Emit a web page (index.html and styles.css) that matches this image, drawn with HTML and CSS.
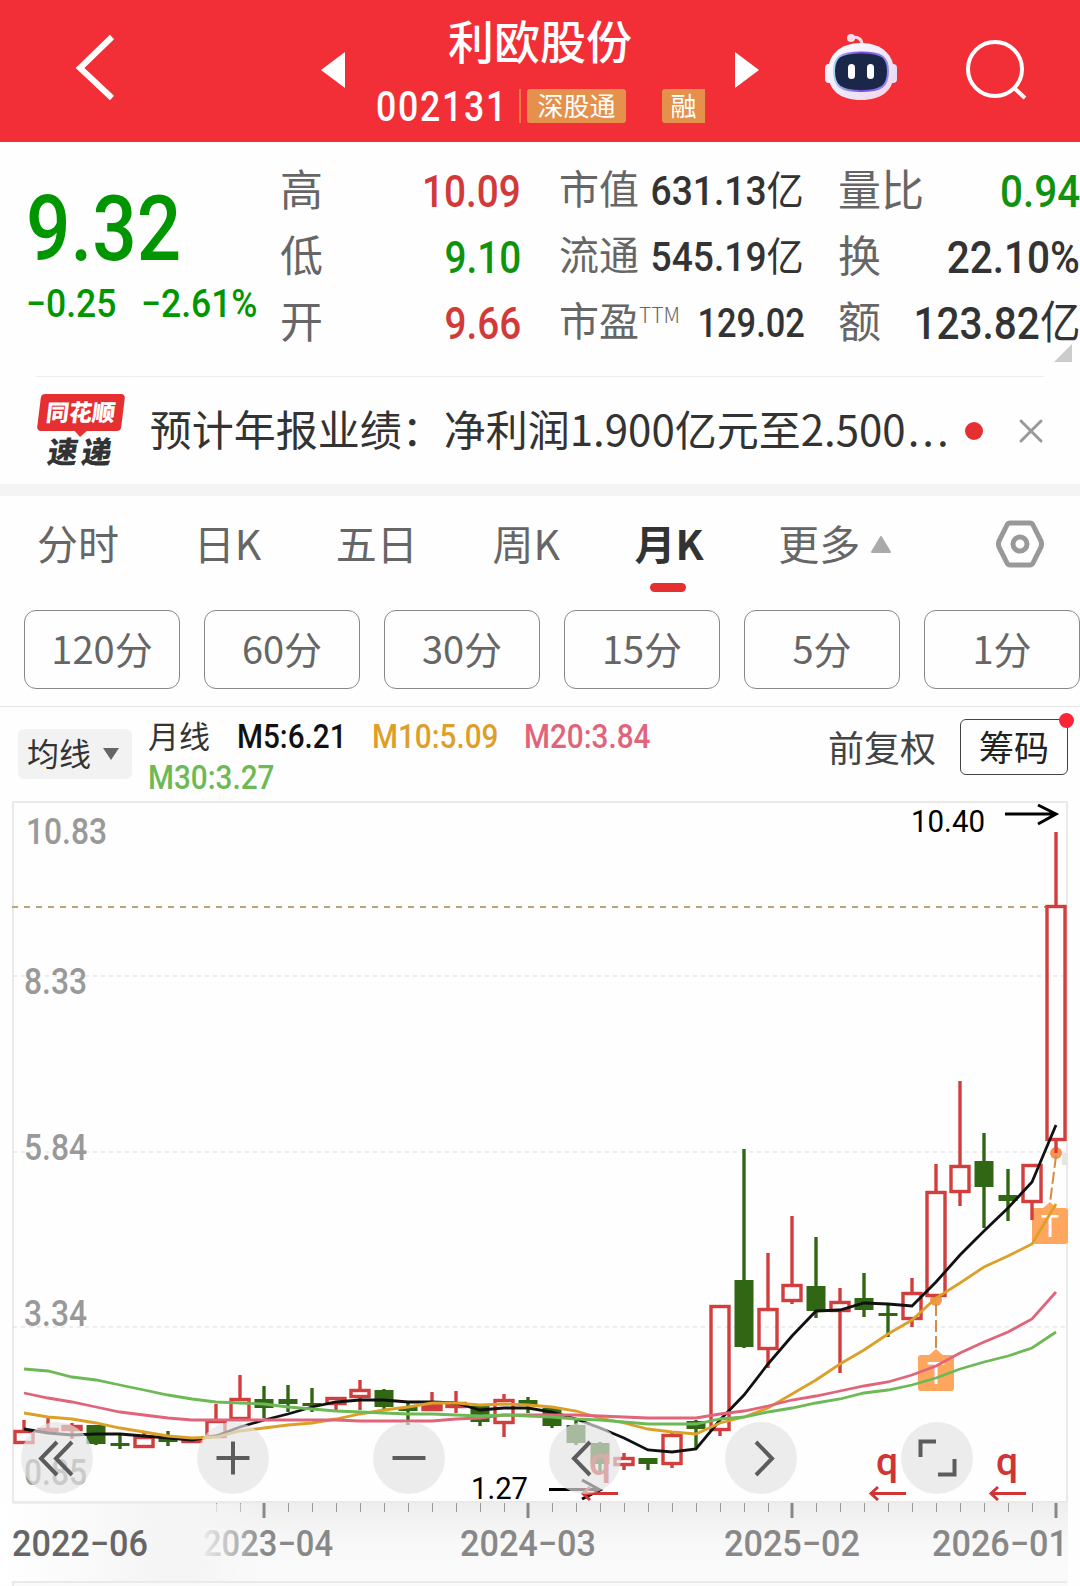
FILE: index.html
```html
<!DOCTYPE html>
<html lang="zh-CN">
<head>
    <meta charset="UTF-8">
    <meta name="viewport" content="width=device-width, initial-scale=1.0">

    <title>利欧股份 002131</title>
    <link rel="stylesheet" href="styles.css">
</head>
<body>

    <!-- Header -->
    <header class="header">
        <svg class="back" width="42" height="70" viewBox="0 0 42 70"><path d="M38 4 L6 35 L38 65"/></svg>
        <svg class="prev" width="24" height="36" viewBox="0 0 24 36"><path d="M24 0V36L0 18Z"/></svg>
        <div class="stock">
            <div class="stock-name">利欧股份</div>
            <div class="stock-info">
                <span class="code">002131</span>
                <span class="tag-line"></span>
                <span class="tag">深股通</span>
                <span class="tag tag-cut">融</span>
            </div>
        </div>
        <svg class="next" width="24" height="36" viewBox="0 0 24 36"><path d="M0 0V36L24 18Z"/></svg>
        <svg class="robot" width="74" height="68" viewBox="0 0 74 68">
            <defs>
                <linearGradient id="shell" x1="0" y1="0" x2="1" y2="1">
                    <stop offset="0" stop-color="#fff"/>
                    <stop offset=".6" stop-color="#ece6fb"/>
                    <stop offset="1" stop-color="#f8cfdf"/>
                </linearGradient>
                <linearGradient id="rim" x1="0" y1="0" x2="1" y2="0">
                    <stop offset="0" stop-color="#a9d4fa"/>
                    <stop offset=".5" stop-color="#7a46d8"/>
                    <stop offset="1" stop-color="#8c8cf0"/>
                </linearGradient>
            </defs>
            <path d="M27 5 C34 3 38 6 38 12" fill="none" stroke="#fbd5e2" stroke-width="3"/>
            <circle cx="27" cy="5" r="4" fill="#fbdde8"/>
            <rect x="1" y="31" width="12" height="19" rx="4" fill="#f3efff"/>
            <rect x="61" y="31" width="12" height="19" rx="4" fill="#e3dcfb"/>
            <path d="M37 10 C58 10 70 22 70 39 C70 58 57 67 37 67 C17 67 4 58 4 39 C4 22 16 10 37 10Z" fill="url(#shell)"/>
            <path d="M37 19.500 C58 19.500 64 24 64 38 C64 53 58 58 37 58 C16 58 10 53 10 38 C10 24 16 19.500 37 19.500Z" fill="#1b2748" stroke="url(#rim)" stroke-width="2"/>
            <rect x="24" y="31" width="7" height="15" rx="3.5" fill="#fff"/>
            <rect x="43" y="31" width="7" height="15" rx="3.5" fill="#fff"/>
        </svg>
        <svg class="search" width="62" height="62" viewBox="0 0 62 62"><circle cx="30" cy="30" r="27"/><path d="M48 48L60 59"/></svg>
    </header>

    <!-- Quote -->
    <section class="quote">
        <div class="price-box">
            <div class="price"><span class="num">9.32</span></div>
            <div class="change"><span class="num">−0.25</span><span class="num">−2.61%</span></div>
        </div>
        <div class="col">
            <div class="row"><label>高</label><span class="num red">10.09</span></div>
            <div class="row"><label>低</label><span class="num green">9.10</span></div>
            <div class="row"><label>开</label><span class="num red">9.66</span></div>
        </div>
        <div class="col col-mid">
            <div class="row"><label>市值</label><span class="num">631.13<i>亿</i></span></div>
            <div class="row"><label>流通</label><span class="num">545.19<i>亿</i></span></div>
            <div class="row"><label>市盈<sup>TTM</sup></label><span class="num pe">129.02</span></div>
        </div>
        <div class="col col-last">
            <div class="row"><label>量比</label><span class="num green">0.94</span></div>
            <div class="row"><label>换</label><span class="num">22.10%</span></div>
            <div class="row"><label>额</label><span class="num">123.82<i>亿</i></span></div>
        </div>
        <span class="corner"></span>
    </section>

    <!-- News -->
    <section class="news">
        <div class="news-logo">
            <div class="logo-top"><span>同花顺</span></div>
            <div class="logo-bottom">速递</div>
        </div>
        <div class="news-text">预计年报业绩：净利润1.900亿元至2.500<span class="dots">...</span></div>
        <span class="dot"></span>
        <svg class="close" width="26" height="26" viewBox="0 0 26 26"><path d="M3 3L23 23M23 3L3 23"/></svg>
    </section>

    <!-- Tabs -->
    <nav class="tabs">
        <span>分时</span>
        <span>日K</span>
        <span>五日</span>
        <span>周K</span>
        <span class="active">月K</span>
        <span class="more">更多 <svg width="22" height="19" viewBox="0 0 22 19"><path d="M11 2L20 17H2Z"/></svg></span>
        <svg class="setting" width="50" height="48" viewBox="0 0 50 48"><path d="M15 3H35Q37 3 38 5L46 21Q47 24 46 27L38 43Q37 45 35 45H15Q13 45 12 43L4 27Q3 24 4 21L12 5Q13 3 15 3Z"/><circle cx="25" cy="24" r="7"/></svg>
    </nav>
    <div class="minutes">
        <button>120分</button>
        <button>60分</button>
        <button>30分</button>
        <button>15分</button>
        <button>5分</button>
        <button>1分</button>
    </div>

    <!-- Average line legend -->
    <section class="legend">
        <div class="select">均线<svg width="18" height="13" viewBox="0 0 18 13"><path d="M1 0H17L9 12Z"/></svg></div>
        <div class="averages">
            <div class="line"><b>月线</b><span class="num m5">M5:6.21</span><span class="num m10">M10:5.09</span><span class="num m20">M20:3.84</span></div>
            <div class="line"><span class="num m30">M30:3.27</span></div>
        </div>
        <span class="adjust">前复权</span>
        <button class="chips">筹码</button>
    </section>

    <!-- Chart -->
    <svg class="chart" width="1080" height="796" viewBox="0 790 1080 796">
        <defs>
            <linearGradient id="axisBg" x1="0" y1="0" x2="0" y2="1">
                <stop offset="0" stop-color="#eee"/>
                <stop offset=".55" stop-color="#f9f9f9"/>
                <stop offset="1" stop-color="#fafafa"/>
            </linearGradient>
            <linearGradient id="fade" x1="0" y1="0" x2="1" y2="0">
                <stop offset="0" stop-color="#fff"/>
                <stop offset=".6" stop-color="#f5f5f5"/>
                <stop offset=".74" stop-color="#f5f5f5"/>
                <stop offset="1" stop-color="#f7f7f7" stop-opacity="0"/>
            </linearGradient>
        </defs>
        <rect x="13" y="1503" width="1055" height="83" fill="url(#axisBg)"/>
        <path class="frame" d="M13 802H1067V1502H13ZM1067 1582H13V1586"/>
        <path class="grid" d="M13 976H1067M13 1152H1067M13 1327H1067"/>
        <path class="now" d="M12 907H1046"/>

        <g class="price-label">
            <text x="26" y="844" textLength="81" lengthAdjust="spacingAndGlyphs">10.83</text>
            <text x="24" y="994" textLength="63" lengthAdjust="spacingAndGlyphs">8.33</text>
            <text x="24" y="1160" textLength="63" lengthAdjust="spacingAndGlyphs">5.84</text>
            <text x="24" y="1326" textLength="63" lengthAdjust="spacingAndGlyphs">3.34</text>
            <text x="24" y="1485" textLength="63" lengthAdjust="spacingAndGlyphs">0.85</text>
        </g>

        <g id="ticks"></g>
        <g class="date-label">
            <text x="203" y="1556" textLength="130" lengthAdjust="spacingAndGlyphs">2023−04</text>
            <text x="460" y="1556" textLength="136" lengthAdjust="spacingAndGlyphs">2024−03</text>
            <text x="724" y="1556" textLength="136" lengthAdjust="spacingAndGlyphs">2025−02</text>
            <text x="932" y="1556" textLength="136" lengthAdjust="spacingAndGlyphs">2026−01</text>
        </g>
        <rect x="0" y="1504" width="265" height="77" fill="url(#fade)"/>
        <text class="first-date" x="12" y="1556" textLength="136" lengthAdjust="spacingAndGlyphs">2022−06</text>

        <rect x="1062" y="1153" width="6" height="12" fill="#e5e5e5"/>
        <g class="badge">
            <rect x="918" y="1355" width="36" height="36" rx="3"/>
            <path d="M928 1356L936 1349L944 1356Z"/>
            <circle cx="936" cy="1300" r="6"/>
            <path class="link" d="M936 1304V1350"/>
            <text x="936" y="1384">T</text>
            <rect x="1032" y="1208" width="36" height="36" rx="3"/>
            <path d="M1042 1209L1050 1202L1058 1209Z"/>
            <circle cx="1056" cy="1153" r="6"/>
            <path class="link" d="M1056 1156L1050 1203"/>
            <text x="1050" y="1237">T</text>
        </g>

        <g id="candles"></g>
        <g id="lines"></g>

        <g class="mark">
            <text x="911" y="832" textLength="74" lengthAdjust="spacingAndGlyphs">10.40</text>
            <path d="M1005 814H1055M1038 805L1056 814L1038 824"/>
            <text x="471" y="1499" textLength="57" lengthAdjust="spacingAndGlyphs">1.27</text>
            <path d="M549 1489.500H599M582 1480L600 1490L582 1499"/>
        </g>
        <g class="rights">
            <text x="600" y="1475">q</text>
            <path d="M618 1493.500H584M590 1487L583 1493.500L590 1500"/>
            <text x="887" y="1475">q</text>
            <path d="M906 1493.500H872M878 1487L871 1493.500L878 1500"/>
            <text x="1007" y="1475">q</text>
            <path d="M1026 1493.500H992M998 1487L991 1493.500L998 1500"/>
        </g>

        <!-- Floating controls -->
        <g class="controls">
            <circle cx="57" cy="1458" r="36"/><path d="M57 1442L41 1458.500L57 1475M72 1442L56 1458.500L72 1475"/>
            <circle cx="233" cy="1458" r="36"/><path d="M216.500 1458H249.500M233 1441.500V1474.500"/>
            <circle cx="409" cy="1458" r="36"/><path d="M392.500 1458H425.500"/>
            <circle cx="585" cy="1458" r="36"/><path d="M590 1442L574 1458.500L590 1475"/>
            <circle cx="761" cy="1458" r="36"/><path d="M756 1442L772 1458.500L756 1475"/>
            <circle cx="937" cy="1458" r="36"/><path d="M936 1441.500H920.500V1457M938 1474.500H954.500V1459"/>
        </g>
    </svg>

    <script>
        var step = 24;
        // type, high, body top, body bottom, low (r = hollow red, f = filled red, g = green)
        var candles = [
            ['r', 1420, 1430, 1444, 1444], ['f', 1418, 1428, 1431, 1431], ['f', 1423, 1425, 1431, 1439],
            ['g', 1425, 1425, 1444, 1445], ['g', 1435, 1443, 1446, 1449], ['r', 1433, 1436, 1448, 1448],
            ['g', 1431, 1437, 1442, 1446], ['f', 1439, 1439, 1443, 1443], ['r', 1404, 1420, 1438, 1438],
            ['r', 1375, 1398, 1420, 1420], ['g', 1386, 1399, 1408, 1418], ['g', 1385, 1399, 1404, 1412],
            ['g', 1388, 1403, 1406, 1412], ['r', 1397, 1397, 1405, 1410], ['r', 1380, 1389, 1398, 1410],
            ['g', 1389, 1390, 1407, 1409], ['g', 1403, 1407, 1411, 1425], ['f', 1392, 1404, 1411, 1411],
            ['f', 1391, 1402, 1408, 1413], ['g', 1406, 1406, 1422, 1426], ['r', 1394, 1399, 1424, 1437],
            ['g', 1397, 1400, 1405, 1413], ['g', 1406, 1408, 1426, 1428], ['g', 1419, 1425, 1443, 1445],
            ['g', 1442, 1443, 1464, 1472], ['r', 1453, 1457, 1466, 1470], ['g', 1458, 1458, 1464, 1470],
            ['r', 1433, 1434, 1465, 1468], ['g', 1420, 1421, 1429, 1449], ['r', 1305, 1305, 1431, 1436],
            ['g', 1149, 1280, 1347, 1348], ['r', 1253, 1308, 1350, 1368], ['r', 1216, 1284, 1302, 1304],
            ['g', 1237, 1286, 1311, 1318], ['r', 1288, 1301, 1312, 1373], ['g', 1273, 1298, 1310, 1317],
            ['g', 1305, 1313, 1316, 1337], ['r', 1278, 1292, 1320, 1327], ['r', 1164, 1191, 1297, 1297],
            ['r', 1081, 1165, 1193, 1206], ['g', 1133, 1161, 1187, 1228], ['g', 1169, 1195, 1201, 1221],
            ['r', 1164, 1164, 1203, 1220], ['r', 832, 905, 1141, 1153]
        ];
        var averages = {
            '#111111': [1429,1433,1435,1434,1434,1436,1438,1440,1436,1427,1420,1414,1407,1402,1400,1400,1402,1402,1403,1410,1408,1408,1412,1419,1428,1438,1450,1452,1449,1420,1395,1364,1336,1311,1310,1303,1304,1306,1282,1255,1231,1208,1182,1125],
            '#dca029': [1413,1417,1419,1423,1428,1432,1436,1438,1437,1431,1428,1425,1423,1419,1414,1410,1407,1403,1403,1405,1404,1405,1407,1411,1418,1423,1429,1432,1434,1423,1417,1408,1394,1380,1364,1350,1334,1320,1298,1283,1267,1256,1244,1204],
            '#e0647a': [1393,1398,1402,1407,1412,1415,1418,1420,1420,1420,1420,1420,1420,1420,1421,1421,1421,1421,1419,1418,1415,1415,1415,1415,1416,1417,1418,1418,1418,1414,1411,1406,1400,1396,1391,1386,1382,1375,1366,1353,1342,1332,1319,1292],
            '#6cb955': [1369,1371,1377,1380,1385,1390,1395,1399,1402,1403,1404,1407,1409,1411,1412,1413,1414,1414,1415,1416,1415,1416,1417,1419,1420,1422,1424,1424,1424,1419,1417,1412,1408,1403,1399,1393,1390,1385,1378,1369,1362,1356,1348,1332]
        };

        var html = '';
        candles.forEach(function (c, i) {
            var x = (i + 1) * step;
            if (c[0] == 'g') {
                html += '<path class="down" d="M' + x + ' ' + c[1] + 'V' + c[4] + '"/>';
                html += '<rect class="down-body" x="' + (x - 9.5) + '" y="' + c[2] + '" width="19" height="' + (c[3] - c[2]) + '"/>';
            } else {
                html += '<path class="up" d="M' + x + ' ' + c[1] + 'V' + c[2] + 'M' + x + ' ' + c[3] + 'V' + c[4] + '"/>';
                html += '<rect class="' + (c[0] == 'f' ? 'up full' : 'up') + '" x="' + (x - 9) + '" y="' + (c[2] + 1.5) + '" width="18" height="' + Math.max(c[3] - c[2] - 3, 1) + '"/>';
            }
        });
        document.getElementById('candles').innerHTML = html;

        html = '';
        for (var color in averages) {
            var points = averages[color].map(function (y, i) { return (i + 1) * step + ',' + y; });
            html += '<polyline points="' + points.join(' ') + '" stroke="' + color + '"/>';
        }
        document.getElementById('lines').innerHTML = html;

        // one tick a month, a long one under each date
        html = '';
        for (var x = 216; x <= 1056; x += step) {
            html += x % 264 == 0 ? '<path class="major" d="M' + x + ' 1503V1518"/>' : '<path d="M' + (x + 0.5) + ' 1503V1512"/>';
        }
        document.getElementById('ticks').innerHTML = html;
    </script>

</body>
</html>
```
FILE: styles.css
```css
* {
    box-sizing: border-box;
}
body {
    margin: 0;
    padding: 0;
    width: 1080px;
    height: 1586px;
    overflow: hidden;
    background-color: #fefefe;
    color: #333;
    font-family: "Noto Sans CJK SC", sans-serif;
}
svg {
    display: block;
    flex: none;
}
button {
    font-family: inherit;
    background: none;
    padding: 0;
}
/* numbers are drawn narrow */
.num {
    display: inline-block;
    font-family: Roboto, "Noto Sans CJK SC", sans-serif;
    font-weight: 500;
    white-space: nowrap;
    transform: scaleX(0.86);
    transform-origin: right center;
}
.red {
    color: #d23a3a;
}
.green {
    color: #0f930f;
}

/* Header */
.header {
    display: flex;
    align-items: flex-start;
    height: 142px;
    background-color: #f22f37;
    color: #fff;
}
.back {
    margin: 33px 0 0 74px;
    fill: none;
    stroke: #fff;
    stroke-width: 6;
}
.prev,
.next {
    margin-top: 52px;
    fill: #fff;
}
.prev {
    margin-left: 205px;
}
.stock {
    width: 330px;
    margin: 0 30px;
}
.stock-name {
    height: 84px;
    line-height: 79px;
    font-size: 46px;
    font-weight: 500;
    text-align: center;
}
.stock-info {
    display: flex;
    align-items: center;
    height: 44px;
    padding-left: 1px;
}
.code {
    width: 143px;
    font-family: Roboto, sans-serif;
    font-size: 42px;
    font-weight: 500;
    letter-spacing: 2px;
    transform: scaleX(0.85);
    transform-origin: left center;
}
.tag-line {
    width: 2px;
    height: 34px;
    margin-right: 6px;
    background-color: #ef7a45;
}
.tag {
    width: 99px;
    height: 34px;
    line-height: 31px;
    background-color: #e5904b;
    border-radius: 3px;
    font-size: 26px;
    text-align: center;
}
.tag-cut {
    width: 43px;
    margin-left: 36px;
    border-radius: 3px 0 0 3px;
}
.robot {
    margin: 33px 0 0 65px;
}
.search {
    margin: 39px 0 0 67px;
    fill: none;
    stroke: #fff;
    stroke-width: 4;
}

/* Quote */
.quote {
    position: relative;
    display: grid;
    grid-template-columns: 254px 241px 241px 243px;
    height: 234px;
    padding: 14px 0 0 26px;
}
.quote .col-mid {
    margin-left: 38px;
    margin-right: -39px;
}
.quote .col-last {
    margin-left: 76px;
    margin-right: -75px;
}
.price-box {
    color: #009600;
}
.price {
    height: 118px;
    margin-top: 5px;
    line-height: 118px;
    font-size: 91px;
}
.price .num {
    transform: scaleX(0.86);
    transform-origin: left center;
}
.change {
    display: flex;
    height: 40px;
    margin-top: 5px;
    line-height: 40px;
    font-size: 39px;
}
.change .num {
    width: 115px;
    transform: scaleX(0.91);
    transform-origin: left center;
}
.row {
    display: flex;
    justify-content: space-between;
    height: 66px;
    line-height: 62px;
    font-size: 43px;
    white-space: nowrap;
}
.row label {
    color: #666;
}
.row .num {
    line-height: 71px;
    font-size: 45px;
}
.row i {
    font-style: normal;
    font-weight: 400;
}
.col-mid .row {
    font-size: 40px;
}
.col-mid .num {
    font-size: 40px;
    transform: scaleX(0.93);
}
.col-mid .pe {
    transform: scaleX(0.86);
}
.col-last .num {
    transform: scaleX(0.9);
}
.row sup {
    font-size: 21px;
    font-weight: 300;
    line-height: 0;
    vertical-align: 13px;
}
.corner {
    position: absolute;
    right: 8px;
    bottom: 14px;
    border-left: 18px solid transparent;
    border-bottom: 18px solid #ccc;
}

/* News */
.news {
    display: flex;
    align-items: center;
    height: 108px;
    margin: 0 36px;
    border-top: 1px solid #eee;
}
.news-logo {
    width: 90px;
    height: 76px;
    text-align: center;
    font-weight: 900;
}
.logo-top {
    position: relative;
    height: 37px;
    margin: 1px 3px 0;
    line-height: 34px;
    background-color: #e62f30;
    border-radius: 4px;
    color: #fff;
    font-size: 23px;
    transform: skewX(-7deg);
}
.logo-top::after {
    content: "";
    position: absolute;
    left: 38px;
    top: 37px;
    border: 6px solid transparent;
    border-top-color: #e62f30;
}
.logo-bottom {
    height: 38px;
    padding-left: 3px;
    line-height: 38px;
    font-size: 30px;
    letter-spacing: 4px;
    transform: skewX(-9deg);
}
.news-text {
    width: 805px;
    margin-left: 24px;
    padding-bottom: 5px;
    font-size: 42px;
    line-height: 60px;
    white-space: nowrap;
}
.dots {
    margin-left: 2px;
    letter-spacing: 3px;
}
.dot {
    flex: none;
    width: 18px;
    height: 18px;
    margin-left: 12px;
    background-color: #e62f30;
    border-radius: 50%;
}
.close {
    margin-left: 35px;
    fill: none;
    stroke: #999;
    stroke-width: 3;
    stroke-linecap: round;
}

/* Tabs */
.tabs {
    display: flex;
    align-items: center;
    height: 126px;
    padding: 0 35px 22px 37px;
    border-top: 12px solid #f4f4f4;
    font-size: 41px;
    line-height: 60px;
    color: #666;
    justify-content: space-between;
}
.tabs .active {
    position: relative;
    color: #333;
    font-weight: 700;
}
.tabs .active::after {
    content: "";
    position: absolute;
    left: 15px;
    bottom: -20px;
    width: 36px;
    height: 9px;
    background-color: #e62f30;
    border-radius: 5px;
}
.tabs .more {
    display: flex;
    align-items: center;
    gap: 10px;
    margin-right: 28px;
}
.more svg {
    margin-top: 4px;
    fill: #aaa;
    stroke: #aaa;
    stroke-width: 2;
    stroke-linejoin: round;
}
.setting {
    margin-top: 4px;
    fill: none;
    stroke: #999;
    stroke-width: 5;
}
.minutes {
    display: flex;
    gap: 24px;
    height: 97px;
    padding-left: 24px;
    border-bottom: 1px solid #e5e5e5;
}
.minutes button {
    flex: none;
    width: 156px;
    height: 79px;
    padding-bottom: 4px;
    border: 1px solid #888;
    border-radius: 12px;
    font-size: 38px;
    color: #666;
}

/* Legend */
.legend {
    display: flex;
    height: 83px;
    padding-left: 18px;
}
.select {
    display: flex;
    align-items: center;
    gap: 11px;
    width: 114px;
    height: 50px;
    margin-top: 22px;
    padding: 0 0 4px 9px;
    background-color: #f2f2f2;
    border-radius: 6px;
    font-size: 32px;
}
.select svg {
    margin-top: 4px;
    fill: #666;
}
.averages {
    width: 697px;
    margin: 9px 0 0 16px;
}
.line {
    display: flex;
    height: 41px;
    line-height: 41px;
    font-size: 33px;
}
.line b {
    width: 89px;
    line-height: 38px;
    font-size: 31px;
    font-weight: 400;
}
.line .num {
    transform: scaleX(0.9);
    transform-origin: left center;
}
.m5 {
    width: 135px;
    color: #111;
}
.m10 {
    width: 152px;
    color: #dca029;
}
.m20 {
    color: #e0647a;
}
.m30 {
    color: #6cb955;
}
.adjust {
    width: 115px;
    margin-left: -17px;
    line-height: 78px;
    font-size: 36px;
    color: #444;
    white-space: nowrap;
}
.chips {
    position: relative;
    width: 108px;
    height: 56px;
    margin: 12px 0 0 17px;
    padding-bottom: 4px;
    border: 1px solid #444;
    border-radius: 6px;
    font-size: 35px;
    color: #222;
}
.chips::after {
    content: "";
    position: absolute;
    top: -7px;
    right: -7px;
    width: 15px;
    height: 15px;
    background-color: #ff2337;
    border-radius: 50%;
}

/* Chart */
.chart {
    font-family: Roboto, sans-serif;
}
.frame {
    fill: none;
    stroke: #eaeaea;
    stroke-width: 2;
}
.grid {
    stroke: #ddd;
    stroke-dasharray: 4 4;
}
.now {
    stroke: #b8a57a;
    stroke-width: 2;
    stroke-dasharray: 6 6;
}
.price-label {
    font-size: 36px;
    font-weight: 500;
    fill: #999;
}
.date-label,
.first-date {
    font-size: 36px;
    font-weight: 500;
    fill: #888;
}
.first-date {
    fill: #666;
}
#ticks path {
    stroke: #999;
}
#ticks .major {
    stroke: #888;
    stroke-width: 3;
}
.up {
    fill: none;
    stroke: #d23d3d;
    stroke-width: 3.4;
}
.full {
    fill: #e02f2c;
}
.down {
    stroke: #316714;
    stroke-width: 3.4;
}
.down-body {
    fill: #316714;
}
#lines polyline {
    fill: none;
    stroke-width: 2.8;
}
.badge {
    fill: #ffa65e;
}
.badge circle {
    fill: #f59650;
}
.badge text {
    fill: #fff;
    font-family: "Noto Sans", sans-serif;
    font-size: 31px;
    font-weight: 400;
    text-anchor: middle;
}
.badge .link {
    fill: none;
    stroke: #d98b45;
    stroke-width: 2;
    stroke-dasharray: 12 4;
}
.mark {
    font-size: 31px;
}
.mark path {
    fill: none;
    stroke: #000;
    stroke-width: 3;
}
.rights {
    fill: #d03535;
    font-size: 39px;
    font-weight: 500;
    text-anchor: middle;
}
.rights path {
    fill: none;
    stroke: #d03535;
    stroke-width: 3;
}
.controls circle {
    fill: rgba(227, 227, 227, 0.67);
}
.controls path {
    fill: none;
    stroke: #5c5c5c;
    stroke-width: 4;
}
```
